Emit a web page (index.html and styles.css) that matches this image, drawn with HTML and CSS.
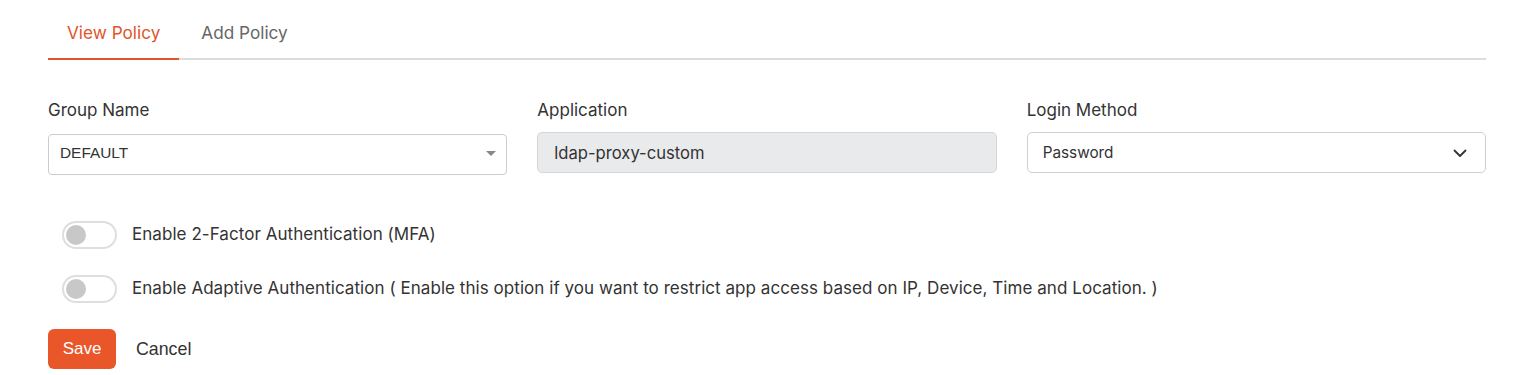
FILE: index.html
```html
<!DOCTYPE html>
<html>
<head>
<meta charset="utf-8">
<link rel="stylesheet" href="styles.css">
</head>
<body>
<div class="page">
  <div class="tabs">
    <div class="tab active">View Policy</div>
    <div class="tab">Add Policy</div>
  </div>
  <div class="fields">
    <div class="field">
      <label class="label">Group Name</label>
      <div class="control select-native">
        <span class="val-arial">DEFAULT</span>
        <span class="caret"></span>
      </div>
    </div>
    <div class="field">
      <label class="label">Application</label>
      <div class="control disabled">
        <span class="app-val">ldap-proxy-custom</span>
      </div>
    </div>
    <div class="field">
      <label class="label">Login Method</label>
      <div class="control">
        <span>Password</span>
        <svg class="chev" width="16" height="16" viewBox="0 0 16 16"><path d="M2.5 5.5 L8 11 L13.5 5.5" fill="none" stroke="#333" stroke-width="1.8" stroke-linecap="round" stroke-linejoin="round"/></svg>
      </div>
    </div>
  </div>
  <div class="toggles">
    <div class="toggle-row">
      <span class="switch"><span class="knob"></span></span>
      <span class="toggle-text">Enable 2-Factor Authentication (MFA)</span>
    </div>
    <div class="toggle-row">
      <span class="switch"><span class="knob"></span></span>
      <span class="toggle-text">Enable Adaptive Authentication ( Enable this option if you want to restrict app access based on IP, Device, Time and Location. )</span>
    </div>
  </div>
  <div class="actions">
    <button class="btn-save">Save</button>
    <button class="btn-cancel">Cancel</button>
  </div>
</div>
</body>
</html>
```

FILE: styles.css
```css
* { box-sizing: border-box; }
html, body { margin: 0; padding: 0; background: #fff; }
body {
  font-family: Inter, "Open Sans", sans-serif;
  color: #333;
}
.page {
  padding: 12px 30px 0 48px;
}
.tabs {
  display: flex;
  gap: 3px;
  border-bottom: 2px solid #dcdcdc;
  height: 48px;
}
.tab {
  padding: 10px 19px 0 19px;
  font-size: 17.2px;
  color: #666;
  height: 48px;
  margin-bottom: -2px;
  border-bottom: 2px solid transparent;
}
.tab.active {
  color: #e0552b;
  border-bottom-color: #e0552b;
}
.fields {
  display: grid;
  grid-template-columns: repeat(3, 1fr);
  column-gap: 30px;
  margin-top: 40px;
}
.field { display: flex; flex-direction: column; }
.label {
  font-size: 17px;
  color: #333;
  line-height: 20px;
  margin-bottom: 12px;
}
.control {
  height: 41px;
  border: 1px solid #cfcfcf;
  border-radius: 5px;
  display: flex;
  align-items: center;
  justify-content: space-between;
  padding: 0 17px 0 15px;
  font-size: 15.3px;
  color: #333;
}
.select-native {
  margin-top: 2px;
  padding: 0 10px 0 11px;
  border-color: #cccccc;
  border-radius: 4px;
}
.val-arial {
  font-family: "Liberation Sans", Arial, sans-serif;
  font-size: 15.4px;
  color: #333;
  margin-top: -3px;
}
.caret {
  width: 0; height: 0;
  border-left: 5px solid transparent;
  border-right: 5px solid transparent;
  border-top: 5px solid #888;
  margin-top: -2px;
}
.disabled {
  background: #e9eaec;
  border-color: #d6d6d8;
  padding-left: 16px;
}
.app-val { font-size: 16.6px; }
.toggles {
  margin-top: 46px;
  padding-left: 14px;
  display: flex;
  flex-direction: column;
  gap: 26px;
}
.toggle-row {
  display: flex;
  align-items: center;
  gap: 15px;
  height: 28px;
}
.switch {
  width: 55px;
  height: 28px;
  border: 2px solid #dedede;
  border-radius: 14px;
  display: flex;
  align-items: center;
  padding-left: 2px;
  flex: none;
}
.knob {
  width: 20px; height: 20px;
  border-radius: 50%;
  background: #c8c8c8;
}
.toggle-text {
  font-size: 17px;
  letter-spacing: 0.05px;
  color: #333;
  margin-top: -3px;
}
.actions {
  margin-top: 26px;
  display: flex;
  align-items: center;
  gap: 20px;
}
.btn-save {
  background: #e8562a;
  color: #fff;
  border: none;
  border-radius: 6px;
  width: 68px;
  height: 40px;
  font-family: "Liberation Sans", Arial, sans-serif;
  font-size: 17px;
  padding: 0;
}
.btn-cancel {
  background: none;
  border: none;
  padding: 0;
  font-family: "Liberation Sans", Arial, sans-serif;
  font-size: 17.8px;
  color: #333;
}
```
